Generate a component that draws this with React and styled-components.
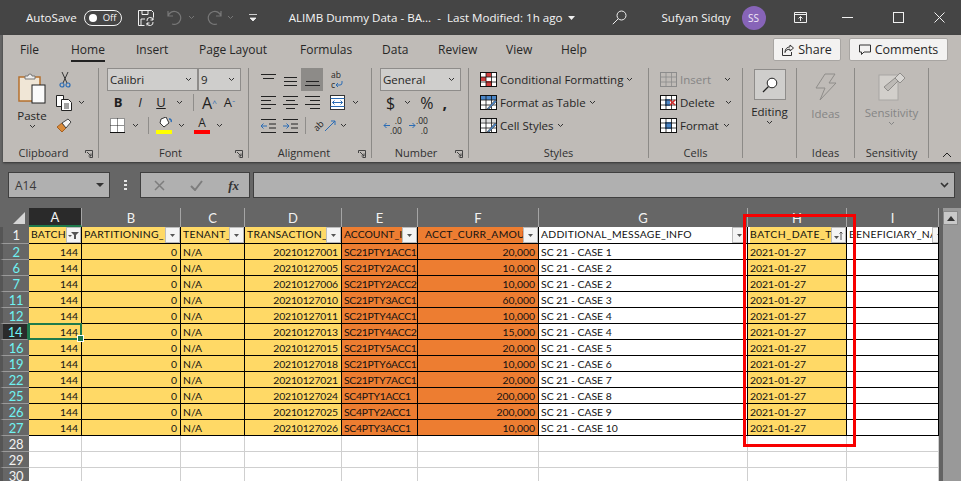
import React from 'react';
import styled, { createGlobalStyle } from 'styled-components';

const ui = '"Open Sans", "Noto Sans", sans-serif';
const cellFont = 'Lato, "Open Sans", sans-serif';

const GlobalStyle = createGlobalStyle`
  html, body { margin: 0; padding: 0; background: #666; }
  body { width: 961px; height: 481px; overflow: hidden; font-family: ${ui}; }
  * { box-sizing: border-box; }
`;

/* ---------- title bar ---------- */
const Page = styled.div`
  width: 961px;
  height: 481px;
  overflow: hidden;
  position: relative;
  background: #666;
`;
const TitleBar = styled.div`
  height: 35px;
  background: #454545;
  display: flex;
  align-items: center;
  color: #f4f4f4;
  font-size: 11.6px;
  white-space: nowrap;
`;
const TitleText = styled.span`
  margin-left: ${(p) => p.$ml || 0}px;
`;
const Toggle = styled.div`
  margin-left: 7px;
  width: 38px;
  height: 16px;
  border: 1px solid #f4f4f4;
  border-radius: 8px;
  display: flex;
  align-items: center;
  padding-left: 4px;
  font-size: 9.5px;
  gap: 6px;
  &::before {
    content: '';
    width: 8px;
    height: 8px;
    border-radius: 50%;
    background: #fff;
  }
`;
const Avatar = styled.div`
  margin-left: 11px;
  width: 24px;
  height: 24px;
  border-radius: 50%;
  background: #8764b8;
  color: #efe6f7;
  font-size: 10px;
  display: flex;
  align-items: center;
  justify-content: center;
`;
const Glyph = styled.svg`
  flex: none;
  display: block;
  margin-left: ${(p) => p.$ml || 0}px;
`;

/* ---------- tabs ---------- */
const Ribbon = styled.div`
  margin-left: 3px;
  height: 127px;
  background: #bfbbb7;
  position: relative;
  box-shadow: 0 1px 2px #333;
`;
const TabRow = styled.div`
  height: 33px;
  display: flex;
  align-items: flex-start;
  padding-left: 17px;
  font-size: 12px;
  color: #262626;
  white-space: nowrap;
`;
const Tab = styled.div`
  width: ${(p) => p.$w}px;
  flex: none;
`;
const TabLabel = styled.span`
  display: inline-block;
  height: 27px;
  line-height: 30px;
  border-bottom: ${(p) => (p.$active ? '2px solid #222' : 'none')};
`;
const TopButton = styled.div`
  height: 23px;
  margin-top: 3px;
  margin-left: ${(p) => p.$ml || 0}px;
  width: ${(p) => p.$w}px;
  background: #f3f2f1;
  border: 1px solid #a8a5a2;
  border-radius: 2px;
  display: flex;
  align-items: center;
  justify-content: center;
  gap: 4px;
  font-size: 12.5px;
`;

/* ---------- ribbon groups ---------- */
const Groups = styled.div`
  display: flex;
  height: 90px;
`;
const Group = styled.div`
  width: ${(p) => p.$w}px;
  flex: none;
  position: relative;
  display: flex;
  flex-direction: column;
  border-right: 1px solid #8c8a87;
`;
const GroupBody = styled.div`
  height: 80px;
  display: flex;
  padding-left: ${(p) => p.$pl || 0}px;
`;
const GroupLabel = styled.div`
  height: 10px;
  line-height: 10px;
  text-align: center;
  font-size: 11px;
  color: #303030;
  white-space: nowrap;
  padding-right: ${(p) => p.$pr || 0}px;
`;
const Launcher = styled.svg`
  position: absolute;
  right: 5px;
  bottom: 0;
`;
const Stack = styled.div`
  display: flex;
  flex-direction: column;
  margin-left: ${(p) => p.$ml || 0}px;
`;
const Line = styled.div`
  height: 23px;
  display: flex;
  align-items: center;
  padding-left: ${(p) => p.$pl || 0}px;
  font-size: 11.5px;
  white-space: nowrap;
  color: ${(p) => (p.$off ? '#858585' : '#262626')};
`;
const Combo = styled.div`
  height: 23px;
  width: ${(p) => p.$w}px;
  margin-left: ${(p) => p.$ml || 0}px;
  background: #cfcecc;
  border: 1px solid #8e8c8a;
  display: flex;
  align-items: center;
  justify-content: space-between;
  padding: 0 5px 0 2px;
  font-size: 11.5px;
  color: #262626;
`;
const Bigbtn = styled.div`
  width: ${(p) => p.$w}px;
  margin-left: ${(p) => p.$ml || 0}px;
  display: flex;
  flex-direction: column;
  align-items: center;
  font-size: 11.5px;
  color: ${(p) => (p.$off ? '#858585' : '#262626')};
  line-height: 16px;
`;
const Sym = styled.span`
  margin-left: ${(p) => p.$ml || 0}px;
  width: ${(p) => (p.$w ? `${p.$w}px` : 'auto')};
  text-align: center;
  font-family: ${(p) => p.$font || ui};
  font-size: ${(p) => p.$size || 12}px;
  font-weight: ${(p) => p.$weight || 400};
  font-style: ${(p) => (p.$italic ? 'italic' : 'normal')};
  text-decoration: ${(p) => (p.$under ? 'underline' : 'none')};
  line-height: 1;
  color: ${(p) => p.$color || '#1f1f1f'};
`;
const Tilted = styled(Sym)`
  transform: rotate(-45deg);
`;
const Gap = styled.span`
  display: block;
  height: ${(p) => p.$h}px;
`;
const Caption = styled.span`
  margin-top: ${(p) => p.$mt}px;
`;
const VSep = styled.div`
  width: 1px;
  height: 17px;
  margin-left: ${(p) => p.$ml}px;
  background: #8f8d8a;
`;
const ActiveAlign = styled.div`
  margin-left: 3px;
  width: 22px;
  height: 23px;
  background: #8d8b88;
  display: flex;
  align-items: center;
  justify-content: center;
`;
const SearchBox = styled.div`
  width: 32px;
  height: 31px;
  margin-top: 1px;
  background: #cfcecc;
  border: 1px solid #8e8c8a;
  display: flex;
  align-items: center;
  justify-content: center;
  margin-bottom: 4px;
`;
const Swatch = styled.div`
  width: 16px;
  height: 4px;
  background: ${(p) => p.$color};
`;
const ColorPick = styled.div`
  margin-left: ${(p) => p.$ml}px;
  width: 16px;
  display: flex;
  flex-direction: column;
  align-items: center;
  gap: 1px;
`;
const TinyNum = styled.div`
  margin-left: ${(p) => p.$ml}px;
  display: flex;
  align-items: center;
  font-size: 8.5px;
  line-height: 10px;
  text-align: right;
  color: #1f1f1f;
`;
const Collapse = styled.svg`
  position: absolute;
  right: 9px;
  bottom: 4px;
`;

/* ---------- formula bar ---------- */
const FormulaBar = styled.div`
  height: 46px;
  padding: 10px 6px 0 8px;
  display: flex;
  align-items: flex-start;
  background: #666;
`;
const FieldBox = styled.div`
  height: 26px;
  width: ${(p) => p.$w}px;
  flex: ${(p) => (p.$grow ? 1 : 'none')};
  margin-left: ${(p) => p.$ml || 0}px;
  background: #b0b0b0;
  border: 1px solid #3f3f3f;
  display: flex;
  align-items: center;
  justify-content: space-between;
  padding: ${(p) => p.$pad || '0 5px 0 6px'};
  font-size: 12px;
  color: #3a3a3a;
`;
const Dots = styled.div`
  margin: 7px 0 0 14px;
  width: 3px;
  height: 11px;
  background: radial-gradient(circle, #e6e6e6 1.3px, transparent 1.5px) 0 0 / 3px 4px;
`;

/* ---------- sheet ---------- */
const Sheet = styled.div`
  position: relative;
  height: 273px;
  display: flex;
`;
const Grid = styled.div`
  display: grid;
  grid-template-columns: 29px 53px 99px 64px 97px 76px 121px 209px 99px 92px;
  grid-template-rows: 19px 17px;
  grid-auto-rows: 16px;
  width: 939px;
  overflow: hidden;
  font-family: ${cellFont};
`;
const Corner = styled.div`
  background: #666;
  display: flex;
  align-items: flex-end;
  justify-content: flex-end;
  padding: 0 4px 3px 0;
`;
const ColHead = styled.div`
  background: ${(p) => (p.$sel ? '#2a2a2a' : '#666')};
  color: #f2f2f2;
  font-size: 13px;
  display: flex;
  align-items: center;
  justify-content: center;
  border-right: 1px solid #a5a5a5;
  border-bottom: ${(p) => (p.$sel ? '2px solid #1f7a4c' : 'none')};
`;
const RowHead = styled.div`
  background: ${(p) => (p.$sel ? '#2a2a2a' : '#666')};
  color: ${(p) => (p.$filtered ? '#6ff2f2' : '#f2f2f2')};
  font-size: 13px;
  letter-spacing: -0.4px;
  display: flex;
  align-items: center;
  justify-content: center;
  border-bottom: 1px solid #9a9a9a;
  border-left: 3px solid #555;
  border-right: ${(p) => (p.$sel ? '2px solid #1f7a4c' : 'none')};
`;
const Cell = styled.div`
  position: relative;
  background: ${(p) => p.$bg || '#fff'};
  border-right: 1px solid ${(p) => (p.$empty ? '#cfcfcf' : '#000')};
  border-bottom: 1px solid ${(p) => (p.$empty ? '#cfcfcf' : '#000')};
  font-size: 10.4px;
  letter-spacing: ${(p) => p.$spacing || 0}px;
  color: #111;
  display: flex;
  align-items: center;
  justify-content: ${(p) => (p.$right ? 'flex-end' : 'flex-start')};
  padding: 0 ${(p) => (p.$right ? 3 : 0)}px 0 ${(p) => (p.$right ? 0 : 2)}px;
  white-space: nowrap;
  overflow: ${(p) => (p.$active ? 'visible' : 'hidden')};
  ${(p) =>
    p.$active &&
    `
    z-index: 2;
    &::before {
      content: '';
      position: absolute;
      inset: -1px -1px -1px -1px;
      border: 2px solid #1f7a4c;
    }
    &::after {
      content: '';
      position: absolute;
      right: -3px;
      bottom: -3px;
      width: 5px;
      height: 5px;
      background: #1f7a4c;
      border: 1px solid #fff;
    }
  `}
`;
const HeadCell = styled(Cell)`
  padding: 0 0 0 ${(p) => p.$pl ?? 2}px;
  letter-spacing: ${(p) => p.$spacing ?? 0.25}px;
  overflow: hidden;
`;
const HeadText = styled.span`
  flex: 1;
  min-width: 0;
  overflow: hidden;
  background: ${(p) => p.$bg || 'transparent'};
  align-self: stretch;
  line-height: 15px;
`;
const FilterBtn = styled.div`
  flex: none;
  width: 15px;
  height: 16px;
  margin-right: ${(p) => p.$mr || 0}px;
  background: #f4f4f4;
  border: 1px solid #bcbcbc;
  display: flex;
  align-items: center;
  justify-content: center;
`;
const Scroll = styled.div`
  width: 22px;
  height: 100%;
  background: #999;
  border-left: 4px solid #636363;
  padding-top: 3px;
`;
const ScrollUp = styled.div`
  width: 15px;
  height: 14px;
  background: #c9c9c9;
  border: 1px solid #8a8a8a;
  display: flex;
  align-items: center;
  justify-content: center;
`;
const Highlight = styled.div`
  position: absolute;
  left: 743px;
  top: 6px;
  width: 113px;
  height: 233px;
  border: 3px solid #f70000;
  z-index: 3;
`;

/* ---------- icons ---------- */
const Chev = ({ ml = 0, off }) => (
  <Glyph $ml={ml} width="7" height="5" viewBox="0 0 7 5">
    <path d="M1 1l2.5 2.5L6 1" fill="none" stroke={off ? '#858585' : '#333'} strokeWidth="1" />
  </Glyph>
);
const Lines = ({ ml, ys, xs }) => (
  <Glyph $ml={ml} width="15" height="16" viewBox="0 0 15 16">
    {ys.map((y, i) => (
      <path key={i} d={`M${xs[i][0]} ${y + 0.5}H${xs[i][1]}`} stroke="#222" strokeWidth="1" />
    ))}
  </Glyph>
);
const TitleChev = ({ ml }) => (
  <Glyph $ml={ml} width="7" height="5" viewBox="0 0 7 5">
    <path d="M1 1l2.5 2.5L6 1" fill="none" stroke="#777" />
  </Glyph>
);
const Launch = () => (
  <Launcher width="8" height="8" viewBox="0 0 8 8">
    <path d="M.5 3V.5H7.5V7.5H4.5M2 2l4 4M3.5 6H6V3.5" fill="none" stroke="#444" />
  </Launcher>
);
const ClipboardIcon = () => (
  <Glyph width="28" height="31" viewBox="0 0 28 31">
    <rect x="1" y="4" width="21" height="24" fill="#f0e6d6" stroke="#b5702e" strokeWidth="1.5" />
    <path d="M7 6V3h3a2 2 0 0 1 4 0h3v3z" fill="#eee" stroke="#777" />
    <rect x="14" y="12" width="13" height="18" fill="#fbfbfb" stroke="#222" />
  </Glyph>
);
const ScissorsIcon = () => (
  <Glyph $ml={4} width="12" height="16" viewBox="0 0 12 16">
    <path d="M3 0l5 11M9 0L4 11" stroke="#333" fill="none" />
    <circle cx="3" cy="13" r="2" fill="none" stroke="#2b6cb5" strokeWidth="1.2" />
    <circle cx="9" cy="13" r="2" fill="none" stroke="#2b6cb5" strokeWidth="1.2" />
  </Glyph>
);
const CopyIcon = () => (
  <Glyph $ml={1} width="17" height="16" viewBox="0 0 17 16">
    <path d="M.5.5h7v11h-7z" fill="#fff" stroke="#222" />
    <path d="M5.5 4.5h7l3 3v8h-10z" fill="#fff" stroke="#222" />
    <path d="M8 9h5M8 11h5M8 13h5" stroke="#444" />
  </Glyph>
);
const BrushIcon = () => (
  <Glyph $ml={1} width="16" height="15" viewBox="0 0 16 15">
    <path d="M1 9l5-4 4 5-4 4z" fill="#d98b3a" stroke="#a65f20" />
    <path d="M6 5l6-4 3 3-5 6z" fill="#f5f5f5" stroke="#444" />
  </Glyph>
);
const BorderIcon = () => (
  <Glyph $ml={3} width="15" height="15" viewBox="0 0 15 15">
    <rect width="15" height="15" fill="#fff" />
    <path d="M.5.5h14v14H.5zM7.5.5v14M.5 7.5h14" fill="none" stroke="#222" strokeDasharray="1 1" />
    <path d="M0 14.5h15" stroke="#111" />
  </Glyph>
);
const BucketIcon = () => (
  <Glyph width="16" height="12" viewBox="0 0 16 12">
    <path d="M5 2l5-2 3 6-5 4-4-4z" fill="#fff" stroke="#333" />
    <path d="M13 2a2 2 0 0 1 2 3" fill="none" stroke="#2b6cb5" strokeWidth="1.4" />
  </Glyph>
);
const WrapArrow = () => (
  <Glyph width="8" height="8" viewBox="0 0 8 8">
    <path d="M7 0v2a2 2 0 0 1-2 2H1M3 2L1 4l2 2" fill="none" stroke="#2b6cb5" />
  </Glyph>
);
const MergeIcon = () => (
  <Glyph $ml={10} width="15" height="15" viewBox="0 0 15 15">
    <rect x=".5" y=".5" width="14" height="14" fill="#fff" stroke="#333" />
    <path d="M.5 3.5h14M.5 11.5h14" stroke="#2b6cb5" />
    <path d="M2.5 7.5h10M4.5 5.5l-2 2 2 2M10.5 5.5l2 2-2 2" fill="none" stroke="#2b6cb5" />
  </Glyph>
);
const IndentIcon = ({ ml, flip }) => (
  <Glyph $ml={ml} width="15" height="14" viewBox="0 0 15 14">
    <path d="M0 .5h15M0 13.5h15M8 5h7M8 9h7" stroke="#222" />
    <path
      d={flip ? 'M0 7h6M3.500 4.500L6 7l-2.500 2.500' : 'M6 7H0M2.500 4.500L0 7l2.500 2.500'}
      fill="none"
      stroke="#2b6cb5"
    />
  </Glyph>
);
const OrientIcon = () => (
  <Glyph width="13" height="13" viewBox="0 0 13 13">
    <path d="M1 12L11 2M7 2h4v4" fill="none" stroke="#2b6cb5" />
  </Glyph>
);
const TableIcon = ({ kind }) => {
  const stroke = kind === 'off' ? '#8c8c8c' : '#111';
  return (
    <Glyph width="17" height="15" viewBox="0 0 17 15">
      <rect x=".5" y=".5" width="16" height="14" fill={kind === 'off' ? '#bfbbb7' : '#fff'} stroke={stroke} />
      {kind === 'cond' && <path d="M6 1h5v4H6zM1 5h5v4H1zM6 9h6v5H6z" fill="#cf3d3d" />}
      {kind === 'table' && <path d="M1 1h15v4H1z" fill="#4a86c8" />}
      {kind === 'styles' && <path d="M1 1h15v3H1z" fill="#ddd" />}
      {kind === 'delete' && <path d="M5 4h5v7H5z" fill="#4a86c8" />}
      {kind === 'format' && <path d="M5 4h7v7H5z" fill="#4a86c8" />}
      <path d="M.5 5h16M.5 10h16M6 .5v14M11.500 .5v14" stroke={stroke} strokeWidth=".8" fill="none" />
      {kind === 'delete' && <path d="M10 5l5 5M15 5l-5 5" stroke="#d02b2b" strokeWidth="1.5" />}
      {(kind === 'table' || kind === 'styles') && (
        <path d="M7 14L15 5l1.500 1.500L9 14z" fill="#4a86c8" stroke="#444" strokeWidth=".6" />
      )}
    </Glyph>
  );
};
const FunnelIcon = () => (
  <Glyph width="11" height="9" viewBox="0 0 11 9">
    <path d="M3 1h8L8 4v4H6V4zM0 4l2 2 2-2z" fill="#555" />
  </Glyph>
);
const MiniCaret = () => (
  <Glyph width="5" height="3" viewBox="0 0 5 3">
    <path d="M0 0h5L2.500 3z" fill="#555" />
  </Glyph>
);
const SortIcon = () => (
  <Glyph width="9" height="9" viewBox="0 0 9 9">
    <path d="M0 5h5L2.500 8z" fill="#555" />
    <path d="M7 9V1M5.500 2.500L7 1l1.500 1.500" stroke="#555" fill="none" />
  </Glyph>
);

/* ---------- data ---------- */
const columns = ['A', 'B', 'C', 'D', 'E', 'F', 'G', 'H', 'I'];
const yellow = '#ffd966';
const orange = '#ed7d31';

const headers = [
  { text: 'BATCH_', bg: yellow, icon: 'funnel' },
  { text: 'PARTITIONING_', bg: yellow },
  { text: 'TENANT_', bg: yellow },
  { text: 'TRANSACTION_', bg: yellow },
  { text: 'ACCOUNT_I', bg: orange, spacing: 0 },
  { text: 'ACCT_CURR_AMOU', bg: orange, pl: 7 },
  { text: 'ADDITIONAL_MESSAGE_INFO' },
  { text: 'BATCH_DATE_T', textBg: yellow, icon: 'sort', spacing: 0.55 },
  { text: 'BENEFICIARY_NA', mr: -9 },
];

const rows = [
  [2, '001', 'SC21PTY1ACC1', '20,000', 'SC 21 - CASE 1'],
  [6, '005', 'SC21PTY2ACC1', '10,000', 'SC 21 - CASE 2'],
  [7, '006', 'SC21PTY2ACC2', '10,000', 'SC 21 - CASE 2'],
  [11, '010', 'SC21PTY3ACC1', '60,000', 'SC 21 - CASE 3'],
  [12, '011', 'SC21PTY4ACC1', '10,000', 'SC 21 - CASE 4'],
  [14, '013', 'SC21PTY4ACC2', '15,000', 'SC 21 - CASE 4'],
  [16, '015', 'SC21PTY5ACC1', '20,000', 'SC 21 - CASE 5'],
  [19, '018', 'SC21PTY6ACC1', '10,000', 'SC 21 - CASE 6'],
  [22, '021', 'SC21PTY7ACC1', '20,000', 'SC 21 - CASE 7'],
  [25, '024', 'SC4PTY1ACC1', '200,000', 'SC 21 - CASE 8'],
  [26, '025', 'SC4PTY2ACC1', '200,000', 'SC 21 - CASE 9'],
  [27, '026', 'SC4PTY3ACC1', '10,000', 'SC 21 - CASE 10'],
];

const TitleRow = () => (
  <TitleBar>
    <TitleText $ml={26}>AutoSave</TitleText>
    <Toggle>Off</Toggle>
    <Glyph $ml={16} width="16" height="16" viewBox="0 0 16 16">
      <path d="M.5.5h13l2 2v5M.5.5v15h6M4 .5v4h6v-4M3 15V9h4" fill="none" stroke="#f0f0f0" />
      <path d="M9 11a3 3 0 0 1 6-1M15 12a3 3 0 0 1-6 1M15 7.500V10h-2.500M9 15.500V13h2.500" fill="none" stroke="#f0f0f0" />
    </Glyph>
    <Glyph $ml={13} width="15" height="15" viewBox="0 0 15 15">
      <path d="M1 1v5h5M1 6a6.500 6.500 0 1 1 4 8" fill="none" stroke="#777" strokeWidth="1.2" />
    </Glyph>
    <TitleChev ml={6} />
    <Glyph $ml={12} width="15" height="15" viewBox="0 0 15 15">
      <path d="M14 1v5H9M14 6a6.500 6.500 0 1 0-4 8" fill="none" stroke="#777" strokeWidth="1.2" />
    </Glyph>
    <TitleChev ml={5} />
    <Glyph $ml={15} width="8" height="8" viewBox="0 0 8 8">
      <path d="M0 .5h8M1 4h6L4 7z" fill="#f0f0f0" stroke="#f0f0f0" strokeWidth=".8" />
    </Glyph>
    <TitleText $ml={32}>ALIMB Dummy Data - BA... &nbsp;-&nbsp; Last Modified: 1h ago</TitleText>
    <Glyph $ml={6} width="7" height="4" viewBox="0 0 7 4">
      <path d="M0 0h7L3.500 4z" fill="#f0f0f0" />
    </Glyph>
    <Glyph $ml={37} width="15" height="15" viewBox="0 0 15 15">
      <circle cx="9.500" cy="5.500" r="4.500" fill="none" stroke="#f0f0f0" />
      <path d="M6.200 8.800L.8 14.200" stroke="#f0f0f0" />
    </Glyph>
    <TitleText $ml={34}>Sufyan Sidqy</TitleText>
    <Avatar>SS</Avatar>
    <Glyph $ml={28} width="13" height="11" viewBox="0 0 13 11">
      <path d="M.5.5h12v10H.5zM.5 2.500h12M6.500 9V4.500M4.500 6.500l2-2 2 2" fill="none" stroke="#f0f0f0" />
    </Glyph>
    <Glyph $ml={35} width="11" height="11" viewBox="0 0 11 11">
      <path d="M0 5.500h11" stroke="#f0f0f0" />
    </Glyph>
    <Glyph $ml={40} width="11" height="11" viewBox="0 0 11 11">
      <rect x=".5" y=".5" width="10" height="10" fill="none" stroke="#f0f0f0" />
    </Glyph>
    <Glyph $ml={30} width="11" height="11" viewBox="0 0 11 11">
      <path d="M.5.500l10 10M10.500.500l-10 10" stroke="#f0f0f0" />
    </Glyph>
  </TitleBar>
);

const tabs = [
  ['File', 51],
  ['Home', 65],
  ['Insert', 63],
  ['Page Layout', 101],
  ['Formulas', 82],
  ['Data', 56],
  ['Review', 68],
  ['View', 55],
  ['Help', 212],
];

const Tabs = () => (
  <TabRow>
    {tabs.map(([name, w]) => (
      <Tab key={name} $w={w}>
        <TabLabel $active={name === 'Home'}>{name}</TabLabel>
      </Tab>
    ))}
    <TopButton $w={68}>
      <Glyph width="12" height="12" viewBox="0 0 12 12">
        <path d="M8 1l3.500 3L8 7V5.200C5 5.200 3.500 6.500 3 8.500 3 5 5 3 8 2.800zM.5 4v7.500h9V8" fill="none" stroke="#333" />
      </Glyph>
      Share
    </TopButton>
    <TopButton $ml={8} $w={99}>
      <Glyph width="12" height="12" viewBox="0 0 12 12">
        <path d="M.5 1h11v7H5L2.500 10.500V8h-2z" fill="none" stroke="#333" />
      </Glyph>
      Comments
    </TopButton>
  </TabRow>
);

const RibbonGroups = () => (
  <Groups>
    <Group $w={96}>
      <GroupBody>
        <Bigbtn $w={34} $ml={12}>
          <Gap $h={5} />
          <ClipboardIcon />
          <Caption $mt={4}>Paste</Caption>
          <Chev ml={0} />
        </Bigbtn>
        <Stack $ml={6}>
          <Line><ScissorsIcon /></Line>
          <Line><CopyIcon /><Chev ml={5} /></Line>
          <Line><BrushIcon /></Line>
        </Stack>
      </GroupBody>
      <GroupLabel $pr={14}>Clipboard</GroupLabel>
      <Launch />
    </Group>

    <Group $w={150}>
      <GroupBody>
        <Stack $ml={8}>
          <Line>
            <Combo $w={91}>Calibri<Chev /></Combo>
            <Combo $w={43}>9<Chev /></Combo>
          </Line>
          <Line>
            <Sym $ml={6} $w={10} $size={13} $weight={700}>B</Sym>
            <Sym $ml={13} $w={8} $size={13} $italic>I</Sym>
            <Sym $ml={12} $w={10} $size={13} $under>U</Sym>
            <Chev ml={10} />
            <VSep $ml={10} />
            <Sym $ml={8} $size={16}>A</Sym>
            <Sym $size={8} $color="#2b6cb5">^</Sym>
            <Sym $ml={7} $size={13}>A</Sym>
            <Sym $size={8} $color="#2b6cb5">ˇ</Sym>
          </Line>
          <Line>
            <BorderIcon />
            <Chev ml={7} />
            <VSep $ml={9} />
            <ColorPick $ml={7}><BucketIcon /><Swatch $color="#ffff00" /></ColorPick>
            <Chev ml={6} />
            <ColorPick $ml={9}><Sym $size={12}>A</Sym><Swatch $color="#ff0000" /></ColorPick>
            <Chev ml={6} />
          </Line>
        </Stack>
      </GroupBody>
      <GroupLabel $pr={6}>Font</GroupLabel>
      <Launch />
    </Group>

    <Group $w={123}>
      <GroupBody>
        <Stack $ml={12}>
          <Line>
            <Lines ys={[2, 6]} xs={[[0, 15], [2, 13]]} />
            <Lines ml={7} ys={[5, 9, 13]} xs={[[1, 14], [1, 14], [1, 14]]} />
            <ActiveAlign><Lines ys={[9, 13]} xs={[[1, 14], [0, 15]]} /></ActiveAlign>
            <Stack $ml={8}>
              <TinyNum $ml={0}>ab</TinyNum>
              <TinyNum $ml={0}>c<WrapArrow /></TinyNum>
            </Stack>
          </Line>
          <Line>
            <Lines ys={[1, 5, 9, 13]} xs={[[0, 15], [0, 10], [0, 15], [0, 10]]} />
            <Lines ml={7} ys={[1, 5, 9, 13]} xs={[[0, 15], [3, 12], [0, 15], [3, 12]]} />
            <Lines ml={7} ys={[1, 5, 9, 13]} xs={[[0, 15], [5, 15], [0, 15], [5, 15]]} />
            <MergeIcon />
            <Chev ml={7} />
          </Line>
          <Line>
            <IndentIcon />
            <IndentIcon ml={7} flip />
            <VSep $ml={7} />
            <Tilted $ml={7} $size={9}>ab</Tilted>
            <OrientIcon />
            <Chev ml={3} />
          </Line>
        </Stack>
      </GroupBody>
      <GroupLabel $pr={12}>Alignment</GroupLabel>
      <Launch />
    </Group>

    <Group $w={97}>
      <GroupBody>
        <Stack $ml={8}>
          <Line><Combo $w={81}>General<Chev /></Combo></Line>
          <Line>
            <Sym $ml={6} $size={16}>$</Sym>
            <Chev ml={9} />
            <Sym $ml={9} $size={16}>%</Sym>
            <Sym $ml={9} $size={16} $weight={700}>,</Sym>
          </Line>
          <Line>
            <TinyNum $ml={3}>
              <Glyph width="7" height="7" viewBox="0 0 7 7"><path d="M7 3.500H1M3.500 1L1 3.500 3.500 6" fill="none" stroke="#2b6cb5" /></Glyph>
              <span>.0<br />.00</span>
            </TinyNum>
            <TinyNum $ml={7}>
              <Glyph width="7" height="7" viewBox="0 0 7 7"><path d="M0 3.500h6M3.500 1L6 3.500 3.500 6" fill="none" stroke="#2b6cb5" /></Glyph>
              <span>.00<br />.0</span>
            </TinyNum>
          </Line>
        </Stack>
      </GroupBody>
      <GroupLabel $pr={8}>Number</GroupLabel>
      <Launch />
    </Group>

    <Group $w={180}>
      <GroupBody $pl={11}>
        <Stack>
          <Line><TableIcon kind="cond" /><TitleText $ml={3}>Conditional Formatting</TitleText><Chev ml={3} /></Line>
          <Line><TableIcon kind="table" /><TitleText $ml={3}>Format as Table</TitleText><Chev ml={3} /></Line>
          <Line><TableIcon kind="styles" /><TitleText $ml={3}>Cell Styles</TitleText><Chev ml={3} /></Line>
        </Stack>
      </GroupBody>
      <GroupLabel>Styles</GroupLabel>
    </Group>

    <Group $w={94}>
      <GroupBody $pl={11}>
        <Stack>
          <Line $off><TableIcon kind="off" /><TitleText $ml={3}>Insert</TitleText><Chev ml={13} /></Line>
          <Line><TableIcon kind="delete" /><TitleText $ml={3}>Delete</TitleText><Chev ml={10} /></Line>
          <Line><TableIcon kind="format" /><TitleText $ml={3}>Format</TitleText><Chev ml={4} /></Line>
        </Stack>
      </GroupBody>
      <GroupLabel>Cells</GroupLabel>
    </Group>

    <Group $w={54}>
      <GroupBody>
        <Bigbtn $w={54}>
          <SearchBox>
            <Glyph width="16" height="16" viewBox="0 0 16 16">
              <circle cx="10" cy="6" r="4.800" fill="#fff" stroke="#222" />
              <path d="M6.500 9.500L1 15" stroke="#222" strokeWidth="1.300" />
            </Glyph>
          </SearchBox>
          Editing
          <Chev />
        </Bigbtn>
      </GroupBody>
    </Group>

    <Group $w={58}>
      <GroupBody>
        <Bigbtn $w={58} $off>
          <Gap $h={5} />
          <Glyph width="22" height="28" viewBox="0 0 22 28">
            <path d="M10 1h10l-6 9h7L5 27l5-12H1z" fill="none" stroke="#8f8d8a" />
          </Glyph>
          <Caption $mt={5}>Ideas</Caption>
        </Bigbtn>
      </GroupBody>
      <GroupLabel>Ideas</GroupLabel>
    </Group>

    <Group $w={74}>
      <GroupBody>
        <Bigbtn $w={74} $off>
          <Gap $h={4} />
          <Glyph width="28" height="29" viewBox="0 0 28 29">
            <rect x="1" y="3" width="19" height="25" fill="#d2cfcb" stroke="#a8a6a3" />
            <path d="M6 15l11-9 3 3-10 10z" fill="#bdbab6" stroke="#8f8d8a" />
            <path d="M17 6l5-5 5 5-5 5z" fill="#d8d6d3" stroke="#8f8d8a" />
          </Glyph>
          <Caption $mt={4}>Sensitivity</Caption>
          <Chev off />
        </Bigbtn>
      </GroupBody>
      <GroupLabel>Sensitivity</GroupLabel>
    </Group>
  </Groups>
);

const Formula = () => (
  <FormulaBar>
    <FieldBox $w={102}>
      A14
      <Glyph width="8" height="4" viewBox="0 0 8 4"><path d="M0 0h8L4 4z" fill="#333" /></Glyph>
    </FieldBox>
    <Dots />
    <FieldBox $w={110} $ml={13} $pad="0 10px 0 13px">
      <Glyph width="11" height="11" viewBox="0 0 11 11"><path d="M1 1l9 9M10 1l-9 9" stroke="#7d7d7d" strokeWidth="1.500" /></Glyph>
      <Glyph width="13" height="11" viewBox="0 0 13 11"><path d="M1 6l4 4 7-9" fill="none" stroke="#7d7d7d" strokeWidth="2" /></Glyph>
      <Sym $font='"Liberation Serif", serif' $size={13} $italic $weight={700} $color="#333">fx</Sym>
    </FieldBox>
    <FieldBox $grow $ml={3}>
      <span />
      <Glyph width="9" height="6" viewBox="0 0 9 6"><path d="M1 1l3.500 3.500L8 1" fill="none" stroke="#333" strokeWidth="1.600" /></Glyph>
    </FieldBox>
  </FormulaBar>
);

const Table = () => (
  <Grid>
    <Corner>
      <Glyph width="12" height="12" viewBox="0 0 12 12"><path d="M12 0v12H0z" fill="#d6d6d6" /></Glyph>
    </Corner>
    {columns.map((c) => (
      <ColHead key={c} $sel={c === 'A'}>{c}</ColHead>
    ))}

    <RowHead>1</RowHead>
    {headers.map((h) => (
      <HeadCell key={h.text} $bg={h.bg} $pl={h.pl} $spacing={h.spacing}>
        <HeadText $bg={h.textBg}>{h.text}</HeadText>
        <FilterBtn $mr={h.mr}>
          {h.icon === 'funnel' ? <FunnelIcon /> : h.icon === 'sort' ? <SortIcon /> : <MiniCaret />}
        </FilterBtn>
      </HeadCell>
    ))}

    {rows.map(([num, tx, account, amount, message]) => (
      <React.Fragment key={num}>
        <RowHead $filtered $sel={num === 14}>{num}</RowHead>
        <Cell $bg={yellow} $right $active={num === 14}>144</Cell>
        <Cell $bg={yellow} $right>0</Cell>
        <Cell $bg={yellow}>N/A</Cell>
        <Cell $bg={yellow} $right $spacing={-0.15}>20210127{tx}</Cell>
        <Cell $bg={orange} $spacing={-0.3}>{account}</Cell>
        <Cell $bg={orange} $right>{amount}</Cell>
        <Cell>{message}</Cell>
        <Cell $bg={yellow}>2021-01-27</Cell>
        <Cell />
      </React.Fragment>
    ))}

    {[28, 29, 30].map((num) => (
      <React.Fragment key={num}>
        <RowHead>{num}</RowHead>
        {columns.map((c) => (
          <Cell key={c} $empty />
        ))}
      </React.Fragment>
    ))}
  </Grid>
);

export default function App() {
  return (
    <Page>
      <GlobalStyle />
      <TitleRow />
      <Ribbon>
        <Tabs />
        <RibbonGroups />
        <Collapse width="10" height="6" viewBox="0 0 10 6">
          <path d="M1 5l4-4 4 4" fill="none" stroke="#222" />
        </Collapse>
      </Ribbon>
      <Formula />
      <Sheet>
        <Table />
        <Scroll>
          <ScrollUp>
            <Glyph width="8" height="5" viewBox="0 0 8 5"><path d="M0 5l4-5 4 5z" fill="#333" /></Glyph>
          </ScrollUp>
        </Scroll>
        <Highlight />
      </Sheet>
    </Page>
  );
}
